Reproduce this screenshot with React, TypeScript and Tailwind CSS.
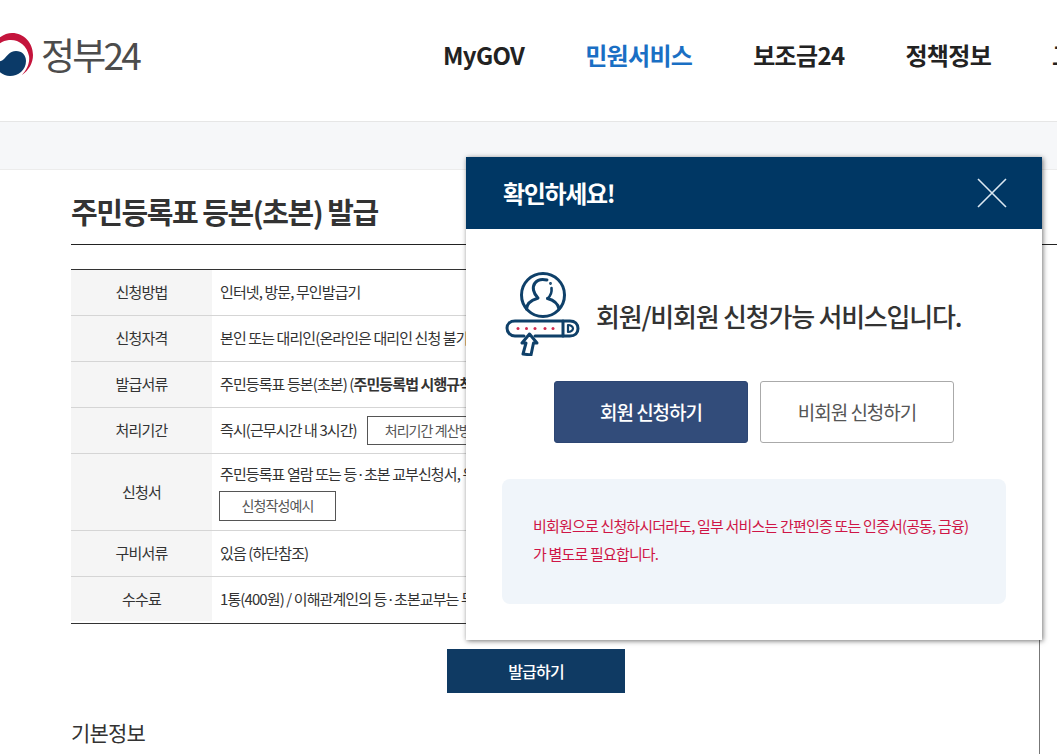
const FONT = "font-['Noto_Sans_CJK_KR','Noto_Sans',sans-serif]";

const ROWS = [
  { label: "신청방법", h: "h-[45px]", body: <span>인터넷, 방문, 무인발급기</span> },
  { label: "신청자격", h: "h-[46px]", body: <span>본인 또는 대리인(온라인은 대리인 신청 불가)</span> },
  {
    label: "발급서류",
    h: "h-[46px]",
    body: (
      <span>
        주민등록표 등본(초본) (<b className="font-bold">주민등록법 시행규칙 별지 서식</b>)
      </span>
    ),
  },
  {
    label: "처리기간",
    h: "h-[46px]",
    body: (
      <div className="flex items-center gap-[10px]">
        <span>즉시(근무시간 내 3시간)</span>
        <span className="flex h-[29px] w-[160px] items-center justify-center border border-[#555] text-[14px] text-[#555]">
          처리기간 계산방법 안내
        </span>
      </div>
    ),
  },
  {
    label: "신청서",
    h: "h-[77px]",
    body: (
      <div className="flex flex-col gap-[5px]">
        <span className="whitespace-nowrap">주민등록표 열람 또는 등·초본 교부신청서, 위임장</span>
        <span className="-ml-px flex h-[30px] w-[117px] items-center justify-center border border-[#555] text-[14px] text-[#555]">
          신청작성예시
        </span>
      </div>
    ),
  },
  { label: "구비서류", h: "h-[46px]", body: <span>있음 (하단참조)</span> },
  { label: "수수료", h: "h-[47px] pb-[2px]", body: <span>1통(400원) / 이해관계인의 등·초본교부는 무료</span> },
];

function Logo() {
  return (
    <svg width="34" height="44" viewBox="0 0 34 44" className="shrink-0">
      <path d="M-9 22 C-9 8 3 0 12 0 C24 0 33 10 33 22 C33 30 29 37 22 42 C27 36 30 30 29 23 C27 12 18 6 9 7 C1 8 -6 13 -9 22 Z" fill="#c4143c" />
      <path d="M-9 22 C-7 30 0 30 4 26 C8 22 10 18 16 18 C22 18 26 22 26 28 C26 37 18 43 10 43 C0 43 -8 33 -9 22 Z" fill="#0b3a68" />
    </svg>
  );
}

function PersonIcon() {
  return (
    <svg width="76" height="86" viewBox="0 -1 76 86" fill="none" stroke="#0f4069" strokeWidth="3" strokeLinecap="round" strokeLinejoin="round" className="shrink-0">
      <circle cx="38" cy="24" r="21.5" />
      <path d="M33 27 C28 22 27 16 30 12 C33 8 38 8 42 9" />
      <circle cx="45.5" cy="12.5" r="0.6" strokeWidth="1.6" />
      <path d="M46.5 17 C47 21 45.5 25 42.5 27.5" strokeWidth="2.6" />
      <path d="M21.5 38 C22 32 27 29 32 27.5 M42.5 27.5 C48 29 53 32 54 38" />
      <path d="M19 65 H10 C5 65 2 61 2 57 C2 53 5 50 10 50 H65 C70 50 73 53 73 57.5 C73 62 70 65 65 65 H30" />
      <path d="M58 50 V65" />
      <path d="M63 54 C66 54 68 56 68 57.5 C68 59 66 61 63 61 Z" strokeWidth="2.2" />
      <path d="M24.5 63 L17 72 H21 L18 83 L26 84 L28.5 72 H32 Z" fill="#fff" />
      <g fill="#d2294d" stroke="none">
        <circle cx="13" cy="57.5" r="1.5" />
        <circle cx="21.5" cy="57.5" r="1.5" />
        <circle cx="30" cy="57.5" r="1.5" />
        <circle cx="40" cy="57.5" r="1.5" />
        <circle cx="48" cy="57.5" r="1.5" />
      </g>
    </svg>
  );
}

function Modal() {
  return (
    <div className="absolute left-[466px] top-[157px] flex h-[483px] w-[576px] flex-col bg-white shadow-[1px_1px_5px_rgba(0,0,0,0.55)]">
      <div className="flex h-[72px] shrink-0 items-center justify-between bg-[#003764] pl-[37px] pr-[35px]">
        <span className="text-[24px] font-bold tracking-[-0.055em] text-white">확인하세요!</span>
        <svg width="30" height="30" viewBox="0 0 30 30" stroke="#dbe8f2" strokeWidth="1.6">
          <path d="M1 1 L29 29 M29 1 L1 29" />
        </svg>
      </div>
      <div className="flex flex-col px-[36px]">
        <div className="mt-[41px] flex items-center gap-[15px] pl-[3px]">
          <PersonIcon />
          <span className="whitespace-nowrap pt-[4px] text-[26px] font-medium tracking-[-0.047em] text-[#333]">
            회원/비회원 신청가능 서비스입니다.
          </span>
        </div>
        <div className="mt-[25px] flex justify-center gap-[12px]">
          <div className="flex h-[62px] w-[194px] items-center justify-center rounded-[3px] border border-[#2d4673] bg-[#324c7a] text-[19px] font-medium tracking-[-0.055em] text-white">
            회원 신청하기
          </div>
          <div className="flex h-[62px] w-[194px] items-center justify-center rounded-[3px] border border-[#aaa] bg-white text-[19px] tracking-[-0.055em] text-[#555]">
            비회원 신청하기
          </div>
        </div>
        <div className="mt-[36px] flex h-[125px] w-[504px] flex-col justify-center rounded-[8px] bg-[#f0f5fa] pb-[3px] pl-[31px] text-[15px] leading-[28px] tracking-[-0.055em] text-[#cf1546]">
          <p>비회원으로 신청하시더라도, 일부 서비스는 간편인증 또는 인증서(공동, 금융)</p>
          <p>가 별도로 필요합니다.</p>
        </div>
      </div>
    </div>
  );
}

export default function App() {
  return (
    <div className={`relative h-[754px] w-[1057px] overflow-hidden bg-white ${FONT}`}>
      <header className="flex h-[122px] items-center border-b border-[#e6e6e6]">
        <div className="flex w-[443px] shrink-0 -translate-y-[6px] items-center gap-[7px]">
          <Logo />
          <span className="text-[37px] font-normal leading-none tracking-[-0.075em] text-[#4c4c4c]">정부24</span>
        </div>
        <nav className="flex -translate-y-[6px] items-center gap-[61px] whitespace-nowrap text-[24px] font-bold tracking-[-0.028em] text-[#222]">
          <span>MyGOV</span>
          <span className="text-[#1a6fc4]">민원서비스</span>
          <span>보조금24</span>
          <span>정책정보</span>
          <span>고객센터</span>
        </nav>
      </header>
      <div className="h-[48px] border-b border-[#ececec] bg-[#f6f7f9]" />
      <main className="pl-[71px]">
        <h1 className="flex h-[75px] items-end border-b border-[#222] pb-[11px] text-[29px] font-bold leading-[44px] tracking-[-0.05em] text-[#333]">
          주민등록표 등본(초본) 발급
        </h1>
        <div className="mt-[24px] w-[900px] border-y border-[#333]">
          {ROWS.map((row, i) => (
            <div key={row.label} className={`flex ${row.h} ${i > 0 ? "border-t border-[#d5d5d5]" : ""}`}>
              <div className="flex w-[141px] shrink-0 items-center justify-center bg-[#f5f5f5] text-[15px] tracking-[-0.05em] text-[#333]">
                {row.label}
              </div>
              <div className="flex items-center whitespace-nowrap pl-[8px] text-[15px] tracking-[-0.06em] text-[#333]">
                {row.body}
              </div>
            </div>
          ))}
        </div>
        <div className="w-[969px] border-r border-[#777] pt-[25px]">
          <div className="flex w-[930px] justify-center">
            <div className="flex h-[44px] w-[178px] items-center justify-center bg-[#0f3a63] text-[16px] font-medium tracking-[-0.05em] text-white">
              발급하기
            </div>
          </div>
          <h2 className="mt-[24px] h-[60px] text-[21px] leading-[30px] tracking-[-0.04em] text-[#333]">기본정보</h2>
        </div>
      </main>
      <Modal />
    </div>
  );
}
